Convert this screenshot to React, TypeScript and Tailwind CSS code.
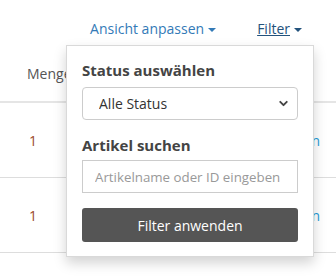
import { ChevronDown } from 'lucide-react';

function Caret({ className }: { className?: string }) {
  return (
    <span
      className={`inline-block w-0 h-0 ml-[4px] align-middle border-l-[4px] border-r-[4px] border-t-[4px] border-l-transparent border-r-transparent ${className ?? ''}`}
    />
  );
}

export default function App() {
  return (
    <div className="relative w-[336px] h-[277px] overflow-hidden bg-white text-[14px] text-[#333]" style={{ fontFamily: '"Open Sans", "Noto Sans", sans-serif' }}>
      {/* toolbar */}
      <div className="flex justify-end items-center h-[50px] pr-[34px] gap-[41px] pt-[8px]">
        <a className="text-[#337ab7] leading-5 cursor-pointer">
          Ansicht anpassen
          <Caret className="border-t-[#337ab7]" />
        </a>
        <a className="text-[#23527c] underline leading-5 cursor-pointer">
          Filter
          <Caret className="border-t-[#23527c]" />
        </a>
      </div>

      {/* table behind */}
      <div className="w-full">
        <div className="flex items-center h-[53px] pl-[27px] pb-[4px] border-b-2 border-[#e5e5e5] text-[#555]">
          Menge
        </div>
        <div className="flex items-center justify-between h-[75px] pl-[29px] pr-[16px] border-b border-[#ddd]">
          <span className="text-[#9c4a2a]">1</span>
          <span className="text-[#1e9bd7]">Bearbeiten</span>
        </div>
        <div className="flex items-center justify-between h-[75px] pl-[29px] pr-[16px] border-b border-[#ddd]">
          <span className="text-[#9c4a2a]">1</span>
          <span className="text-[#1e9bd7]">Bearbeiten</span>
        </div>
      </div>

      {/* filter dropdown */}
      <div className="absolute left-[66px] top-[45px] w-[248px] bg-white border border-black/15 shadow-[0_6px_12px_rgba(0,0,0,0.175)] px-[15px] pt-[14px] pb-[14px]">
        <div className="font-bold text-[15px] text-[#444] leading-5 mb-[7px]">Status auswählen</div>
        <div className="relative">
          <select className="appearance-none w-full h-[33px] border border-[#ccc] rounded-[4px] pl-[16px] pr-8 bg-white text-[14px] text-[#333] outline-none">
            <option>Alle Status</option>
          </select>
          <ChevronDown className="absolute right-[8px] top-[10px] w-[13px] h-[13px] text-[#444] pointer-events-none" strokeWidth={3.5} />
        </div>
        <div className="font-bold text-[15px] text-[#444] leading-5 mt-[15px] mb-[5px]">Artikel suchen</div>
        <input
          className="w-full h-[33px] border border-[#ccc] px-[12px] text-[13.3px] text-[#333] placeholder:text-[#999] outline-none"
          placeholder="Artikelname oder ID eingeben"
        />
        <button className="w-full h-[34px] mt-[15px] bg-[#555] text-white rounded-[3px] text-[14px]">
          Filter anwenden
        </button>
      </div>
    </div>
  );
}
